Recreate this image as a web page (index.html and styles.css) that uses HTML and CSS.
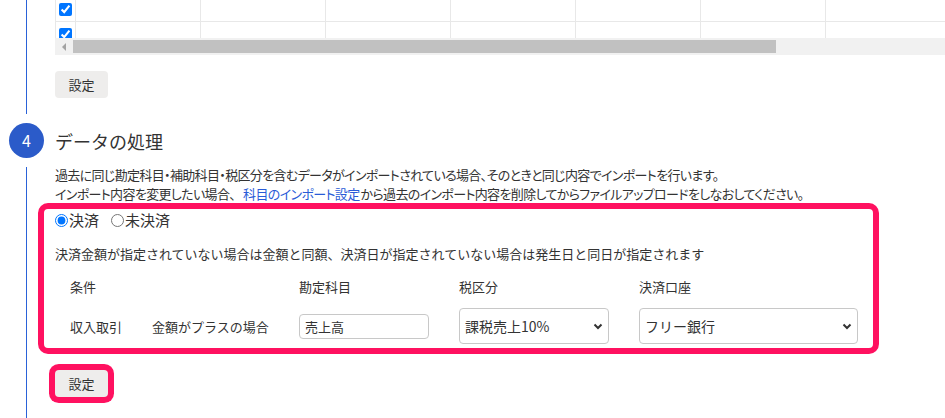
FILE: index.html
```html
<!DOCTYPE html>
<html lang="ja">

<head>
    <meta charset="UTF-8">
    <meta name="viewport" content="width=device-width, initial-scale=1.0">
    <title>インポート設定</title>
    <link rel="stylesheet" href="styles.css">
</head>

<body>
    <div class="steps">
        <!-- ステップ3 (一部のみ表示) -->
        <section class="step step-prev">
            <div class="rail"><span class="rail-line"></span></div>
            <div class="step-body">
                <div class="grid-scroll">
                    <div class="grid-view">
                        <table class="check-table">
                            <colgroup>
                                <col class="col-check">
                                <col><col><col><col><col><col><col><col>
                            </colgroup>
                            <tr>
                                <td><input type="checkbox" checked></td>
                                <td></td><td></td><td></td><td></td><td></td><td></td><td></td><td></td>
                            </tr>
                            <tr>
                                <td><input type="checkbox" checked></td>
                                <td></td><td></td><td></td><td></td><td></td><td></td><td></td><td></td>
                            </tr>
                        </table>
                    </div>
                    <div class="hscroll">
                        <span class="hscroll-btn"><span class="hscroll-arrow"></span></span>
                        <span class="hscroll-thumb"></span>
                    </div>
                </div>
                <button class="btn">設定</button>
            </div>
        </section>

        <!-- ステップ4 データの処理 -->
        <section class="step">
            <div class="rail">
                <span class="rail-line rail-top"></span>
                <span class="step-num">4</span>
                <span class="rail-line"></span>
            </div>
            <div class="step-body step-body-main">
                <h2 class="step-title">データの処理</h2>
                <p class="step-desc">過去に同じ勘定科目・補助科目・税区分を含むデータがインポートされている場合、そのときと同じ内容でインポートを行います。<br>インポート内容を変更したい場合、<a href="#" class="link">科目のインポート設定</a>から過去のインポート内容を削除してからファイルアップロードをしなおしてください。</p>

                <div class="highlight">
                    <div class="settle-options">
                        <label class="radio"><input type="radio" name="settle" checked>決済</label>
                        <label class="radio"><input type="radio" name="settle">未決済</label>
                    </div>
                    <p class="note">決済金額が指定されていない場合は金額と同額、決済日が指定されていない場合は発生日と同日が指定されます</p>

                    <div class="rule-grid">
                        <div class="rule-head rule-cond">条件</div>
                        <div class="rule-head">勘定科目</div>
                        <div class="rule-head">税区分</div>
                        <div class="rule-head">決済口座</div>

                        <div class="rule-cell">収入取引</div>
                        <div class="rule-cell">金額がプラスの場合</div>
                        <div class="rule-cell"><input class="text-input" type="text" value="売上高"></div>
                        <div class="rule-cell">
                            <div class="select-wrap select-tax">
                                <select class="select">
                                    <option>課税売上10%</option>
                                    <option>課税売上8%</option>
                                    <option>非課売上</option>
                                </select>
                                <svg class="chevron" width="10" height="7" viewBox="0 0 10 7"><polyline points="1.5,1.5 5,5 8.5,1.5" fill="none" stroke="#333" stroke-width="2"/></svg>
                            </div>
                        </div>
                        <div class="rule-cell">
                            <div class="select-wrap">
                                <select class="select">
                                    <option>フリー銀行</option>
                                    <option>現金</option>
                                </select>
                                <svg class="chevron" width="10" height="7" viewBox="0 0 10 7"><polyline points="1.5,1.5 5,5 8.5,1.5" fill="none" stroke="#333" stroke-width="2"/></svg>
                            </div>
                        </div>
                    </div>
                </div>

                <div class="btn-mark"><button class="btn">設定</button></div>
            </div>
        </section>
    </div>
</body>

</html>
```

FILE: styles.css
```css
:root {
    --step-blue: #2b5bc9;
    --rail-blue: #2a62d8;
    --mark-pink: #ff1160;
    --text: #333333;
    --line-gray: #e8e8e8;
}

* {
    box-sizing: border-box;
}

body {
    margin: 0;
    background: #fff;
    color: var(--text);
    font-family: "Noto Sans CJK JP", "Noto Sans", sans-serif;
    font-size: 13px;
    overflow: hidden;
}

/* ステップ共通 */
.step {
    display: grid;
    grid-template-columns: 55px 1fr;
}

.rail {
    width: 53px;
    display: flex;
    flex-direction: column;
    align-items: center;
}

.rail-line {
    flex: 1;
    width: 1px;
    background: var(--rail-blue);
}

.rail-top {
    flex: 0 0 8px;
}

.step-num {
    width: 35px;
    height: 35px;
    margin: 9px 0;
    border-radius: 50%;
    background: var(--step-blue);
    color: #fff;
    font-size: 16px;
    line-height: 35px;
    text-align: center;
}

.step-prev .step-body {
    padding-bottom: 8px;
}

.step-body-main {
    padding-top: 23px;
    padding-bottom: 40px;
}

/* チェック表 */
.grid-scroll {
    width: 890px;
}

.grid-view {
    height: 38px;
    overflow: hidden;
    border-left: 1px solid var(--line-gray);
}

.check-table {
    margin-top: -4px;
    border-collapse: collapse;
    table-layout: fixed;
    width: 1019px;
}

.check-table col {
    width: 125px;
}

.check-table col.col-check {
    width: 19px;
}

.check-table td {
    height: 25px;
    padding: 3px 0 2px;
    border: 1px solid var(--line-gray);
    border-left: none;
}

.check-table input {
    display: block;
    margin: 3px;
}

/* 横スクロールバー */
.hscroll {
    display: flex;
    align-items: center;
    height: 17px;
    background: #f1f1f1;
}

.hscroll-btn {
    width: 18px;
    height: 17px;
    display: flex;
    align-items: center;
    justify-content: center;
}

.hscroll-arrow {
    width: 0;
    height: 0;
    border-top: 4px solid transparent;
    border-bottom: 4px solid transparent;
    border-right: 4px solid #a3a3a3;
}

.hscroll-thumb {
    width: 703px;
    height: 13px;
    background: #c1c1c1;
}

/* ボタン */
.btn {
    display: block;
    width: 53px;
    height: 27px;
    margin-top: 16px;
    padding: 0;
    border: none;
    border-radius: 4px;
    background: #eeedec;
    color: var(--text);
    font-family: inherit;
    font-size: 13px;
    cursor: pointer;
}

.btn:hover {
    background: #e2e1df;
}

.btn-mark {
    margin-top: 16px;
}

.btn-mark .btn {
    margin-top: 0;
    box-shadow: 0 0 0 6px var(--mark-pink);
}

/* 見出し・説明 */
.step-title {
    margin: 0;
    font-size: 18px;
    font-weight: normal;
    line-height: 24px;
}

.step-desc {
    margin: 12px 0 0;
    line-height: 19px;
    font-feature-settings: "palt";
    letter-spacing: -0.65px;
    white-space: nowrap;
}

.link {
    margin: 0 1px 0 8px;
    color: #2a5bd7;
    text-decoration: none;
}

/* 強調枠 */
.highlight {
    width: 841px;
    margin: 0 0 0 -17px;
    padding: 1px 0 4px 11px;
    border: 6px solid var(--mark-pink);
    border-radius: 10px;
}

.settle-options {
    display: flex;
    gap: 12px;
    font-size: 15px;
    line-height: 20px;
}

.radio {
    display: flex;
    align-items: center;
    gap: 1px;
}

.radio input {
    margin: 0;
}

.note {
    margin: 15px 0 0;
    line-height: 17px;
}

/* 条件表 */
.rule-grid {
    display: grid;
    grid-template-columns: 82px 147px 160px 180px 219px;
    row-gap: 13px;
    align-items: center;
    margin: 16px 0 0 15px;
    line-height: 17px;
}

.rule-cond {
    grid-column: span 2;
}

.text-input {
    width: 130px;
    height: 25px;
    padding: 0 5px;
    border: 1px solid #c8c8c8;
    border-radius: 4px;
    color: var(--text);
    font-family: inherit;
    font-size: 13px;
}

.select-wrap {
    position: relative;
}

.select-tax {
    width: 150px;
}

.select {
    appearance: none;
    -webkit-appearance: none;
    width: 100%;
    height: 36px;
    padding: 0 24px 0 5px;
    border: 1px solid #c8c8c8;
    border-radius: 4px;
    background: #fff;
    color: var(--text);
    font-family: inherit;
    font-size: 14px;
}

.chevron {
    position: absolute;
    right: 6px;
    top: 15px;
    pointer-events: none;
}
```
